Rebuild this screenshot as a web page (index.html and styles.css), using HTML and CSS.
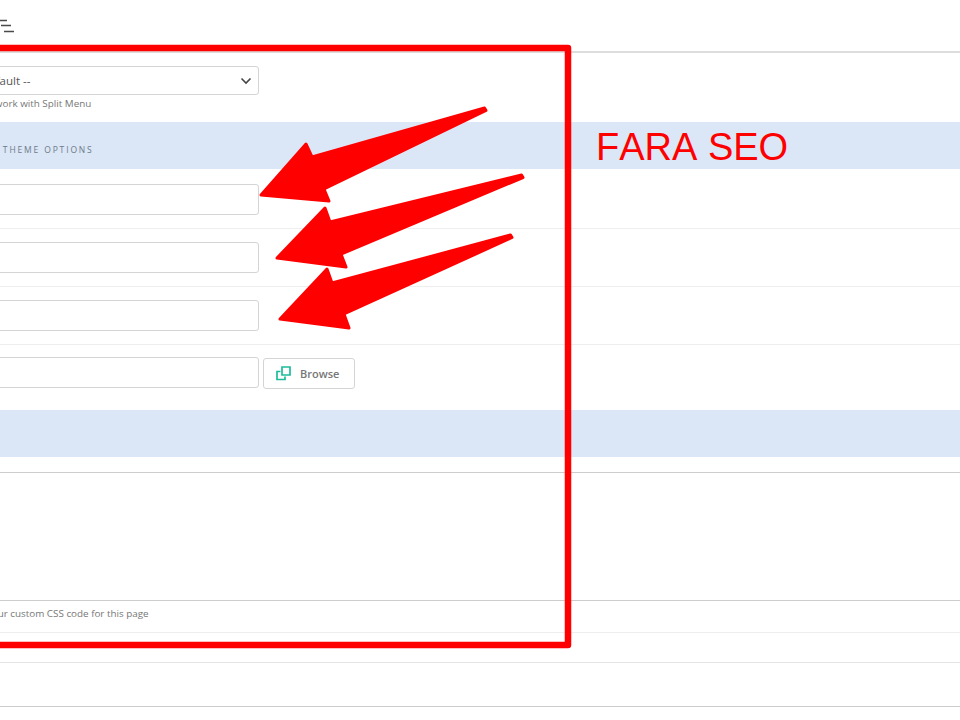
FILE: index.html
```html
<!DOCTYPE html>
<html lang="en">
<head>
<meta charset="utf-8">
<title>Page options</title>
<link rel="stylesheet" href="styles.css">
</head>
<body>
<div class="page">
  <header class="topbar">
    <svg class="menu-icon" width="16" height="14" viewBox="0 0 16 14"><path d="M0 1.5H7M1 6.5H11M4 12.5H14" fill="none" stroke="#4a4a4a" stroke-width="1.6"/></svg>
  </header>
  <section class="row-select">
    <div class="select"><span>-- Default --</span>
      <svg width="12" height="8" viewBox="0 0 12 8"><path d="M1.5 1.5L6 6L10.5 1.5" fill="none" stroke="#444" stroke-width="1.6"/></svg>
    </div>
    <p class="hint hint-select">Does work with Split Menu</p>
  </section>
  <div class="band"><span class="band-label">Page Theme Options</span></div>
  <div class="row row-first"><div class="input"></div></div>
  <div class="row"><div class="input"></div></div>
  <div class="row"><div class="input"></div></div>
  <div class="row-browse">
    <div class="input"></div>
    <div class="browse">
      <svg width="15" height="15" viewBox="0 0 15 15"><path d="M4.5 5.5H1V13.5H9V10.5" fill="none" stroke="#1cbc9c" stroke-width="1.7"/><path d="M6 1H14V9H6Z" fill="none" stroke="#1cbc9c" stroke-width="1.7"/></svg>
      <span>Browse</span>
    </div>
  </div>
  <div class="band"></div>
  <div class="code-area"></div>
  <div class="row-note"><p class="hint">Add your custom CSS code for this page</p></div>
  <div class="row-blank"></div>
  <div class="row-last"></div>
</div>
<svg class="annotation" width="960" height="720" viewBox="0 0 960 720">
  <path class="frame" d="M-10 48H568V645H-10"/>
  <path class="arrow" d="M484.500 108L486 110.500L324 189L329 201L261 195L306 144L312 157Z"/>
  <path class="arrow" d="M521.500 175L523 177.500L341 254L346 267L277 258L325 208L330 222Z"/>
  <path class="arrow" d="M510.500 235L512 237.500L344 314L349 328L280 319L327 269L332 283Z"/>
</svg>
<div class="note">FARA SEO</div>
</body>
</html>
```
FILE: styles.css
```css
html, body { margin: 0; padding: 0; }
body {
  width: 960px;
  height: 720px;
  overflow: hidden;
  position: relative;
  background: #fff;
  font-family: "Open Sans", sans-serif;
  color: #777;
}
.page { display: flex; flex-direction: column; }
.topbar {
  height: 51px;
  border-bottom: 2px solid #ddd;
  display: flex;
  align-items: flex-start;
}
.menu-icon { margin-top: 19px; }
.row-select { height: 69px; padding-top: 13px; box-sizing: border-box; margin-left: -34px; }
.select, .input {
  width: 292.5px;
  box-sizing: border-box;
  border: 1px solid #d4d4d4;
  border-radius: 3px;
  background: #fff;
}
.select {
  height: 29px;
  display: flex;
  align-items: center;
  justify-content: space-between;
  padding: 0 5.500px 0 3.500px;
  font-size: 11.5px;
  color: #555;
}
.hint { margin: 0; font-size: 9.85px; line-height: 14px; color: #777; }
.hint-select { margin: 1px 0 0 3px; }
.band { height: 47px; background: #dbe6f6; display: flex; align-items: center; }
.band-label {
  margin-left: -30px;
  margin-top: 7px;
  font-size: 8.5px;
  letter-spacing: 1.85px;
  text-transform: uppercase;
  color: #6c7a89;
}
.row {
  height: 58px;
  box-sizing: border-box;
  padding-top: 13px;
  border-bottom: 1px solid #eee;
}
.row-first { height: 60px; padding-top: 15px; }
.row .input, .row-browse .input { height: 31px; margin-left: -34px; }
.row-browse {
  height: 65px;
  box-sizing: border-box;
  padding-top: 12px;
  display: flex;
  align-items: flex-start;
  gap: 4.500px;
}
.browse {
  width: 92px;
  height: 31px;
  margin-top: 1px;
  box-sizing: border-box;
  border: 1px solid #d4d4d4;
  border-radius: 3px;
  display: flex;
  align-items: center;
  gap: 9px;
  padding-left: 12px;
  font-size: 11px;
  font-weight: 600;
  color: #777;
}
.code-area { height: 144px; box-sizing: border-box; border-bottom: 1px solid #ccc; }
.code-area::before { content: ""; display: block; margin-top: 15px; border-top: 1px solid #ccc; }
.row-note { height: 32px; box-sizing: border-box; margin-left: -34px; padding-top: 5px; border-bottom: 1px solid #eee; }
.row-blank { height: 30px; box-sizing: border-box; border-bottom: 1px solid #e4e4e4; }
.row-last { height: 44px; box-sizing: border-box; border-bottom: 1px solid #ccc; }
.annotation { position: absolute; left: 0; top: 0; }
.frame { fill: none; stroke: #f00; stroke-width: 6.5; stroke-linejoin: round; }
.arrow { fill: #f00; stroke: #f00; stroke-width: 3; stroke-linejoin: round; }
.note {
  position: absolute;
  left: 596px;
  top: 125px;
  font-family: "Liberation Sans", sans-serif;
  font-size: 38px;
  font-kerning: none;
  line-height: 44px;
  color: #f00;
  white-space: nowrap;
}
```
